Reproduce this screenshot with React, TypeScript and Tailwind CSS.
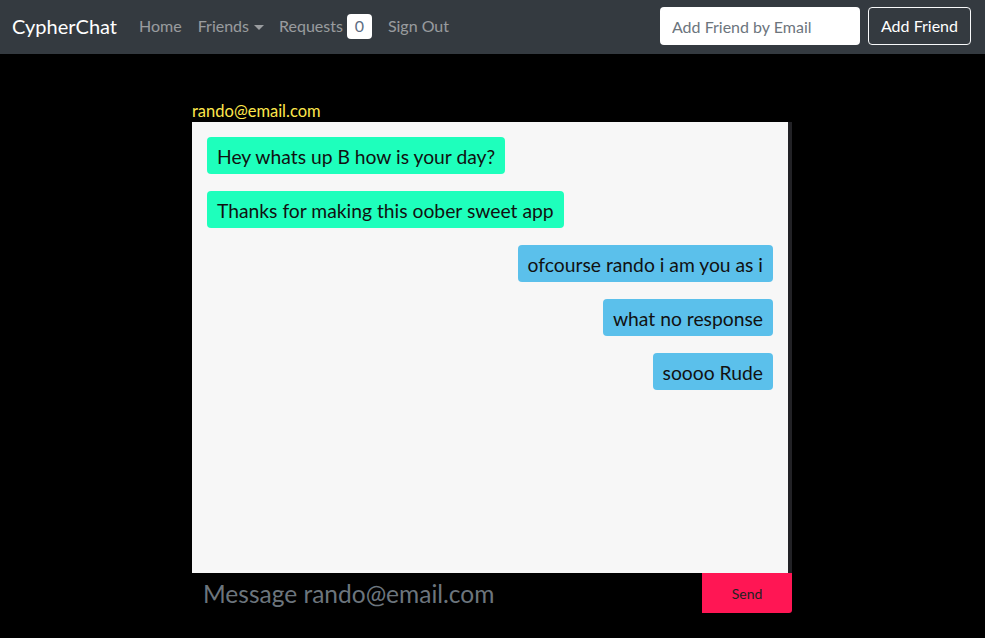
import { useState } from 'react';

type Msg = { text: string; mine: boolean };

const messages: Msg[] = [
  { text: 'Hey whats up B how is your day?', mine: false },
  { text: 'Thanks for making this oober sweet app', mine: false },
  { text: 'ofcourse rando i am you as i', mine: true },
  { text: 'what no response', mine: true },
  { text: 'soooo Rude', mine: true },
];

const font = { fontFamily: '"Segoe UI", Lato, "Liberation Sans", sans-serif' };

export default function App() {
  const [draft, setDraft] = useState('');

  return (
    <div className="min-h-screen w-full bg-black" style={font}>
      {/* navbar */}
      <nav className="h-[54px] bg-[#343a40] flex items-center justify-between pl-3 pr-[14px] pb-[2px]">
        <div className="flex items-center">
          <span className="text-white text-[20px] mr-[22px]">CypherChat</span>
          <a className="text-[16px] text-white/50 mr-[16px]">Home</a>
          <a className="text-[16px] text-white/50 mr-[15px] flex items-center">
            Friends
            <span className="ml-[5px] mt-[2px] w-0 h-0 border-l-[5px] border-r-[5px] border-t-[5px] border-l-transparent border-r-transparent border-t-white/50" />
          </a>
          <a className="text-[16px] text-white/50 flex items-center mr-[16px]">
            Requests
            <span className="ml-[4px] w-[25px] h-[25px] rounded-[4px] bg-white text-[#5d6d83] text-[16px] flex items-center justify-center">0</span>
          </a>
          <a className="text-[16px] text-white/50">Sign Out</a>
        </div>
        <div className="flex items-center gap-2">
          <input
            placeholder="Add Friend by Email"
            className="w-[200px] h-[38px] rounded-[4px] bg-white px-3 text-[16px] text-gray-700 placeholder:text-[#6c757d] outline-none"
          />
          <button className="h-[38px] px-3 rounded-[4px] border border-[#f8f9fa] text-white text-[16px]">Add Friend</button>
        </div>
      </nav>

      {/* chat */}
      <div className="w-[600px] ml-[192px] pt-[46px]">
        <div className="text-[#fde74c] text-[16.5px] leading-[22px]">rando@email.com</div>
        <div className="h-[451px] flex">
          <div className="flex-1 bg-[#f7f7f7] pt-[15px] px-[15px] flex flex-col gap-[17px]">
            {messages.map((m, i) => (
              <div key={i} className={m.mine ? 'flex justify-end' : 'flex justify-start'}>
                <div
                  className={
                    (m.mine ? 'bg-[#5bc0eb]' : 'bg-[#1effbc]') +
                    ' rounded-[4px] px-[10px] pt-[3px] h-[37px] flex items-center text-[19.3px] text-[#111]'
                  }
                >
                  {m.text}
                </div>
              </div>
            ))}
          </div>
          <div className="w-[4px] bg-[#222226]" />
        </div>
        <div className="flex h-[40px]">
          <input
            value={draft}
            onChange={(e) => setDraft(e.target.value)}
            placeholder="Message rando@email.com"
            className="flex-1 bg-black px-[11px] pt-[2px] text-[24.5px] text-white placeholder:text-[#6c757d] outline-none"
          />
          <button className="w-[90px] bg-[#ff1654] text-[#222] text-[14px] rounded-br-[3px]">Send</button>
        </div>
      </div>
    </div>
  );
}
